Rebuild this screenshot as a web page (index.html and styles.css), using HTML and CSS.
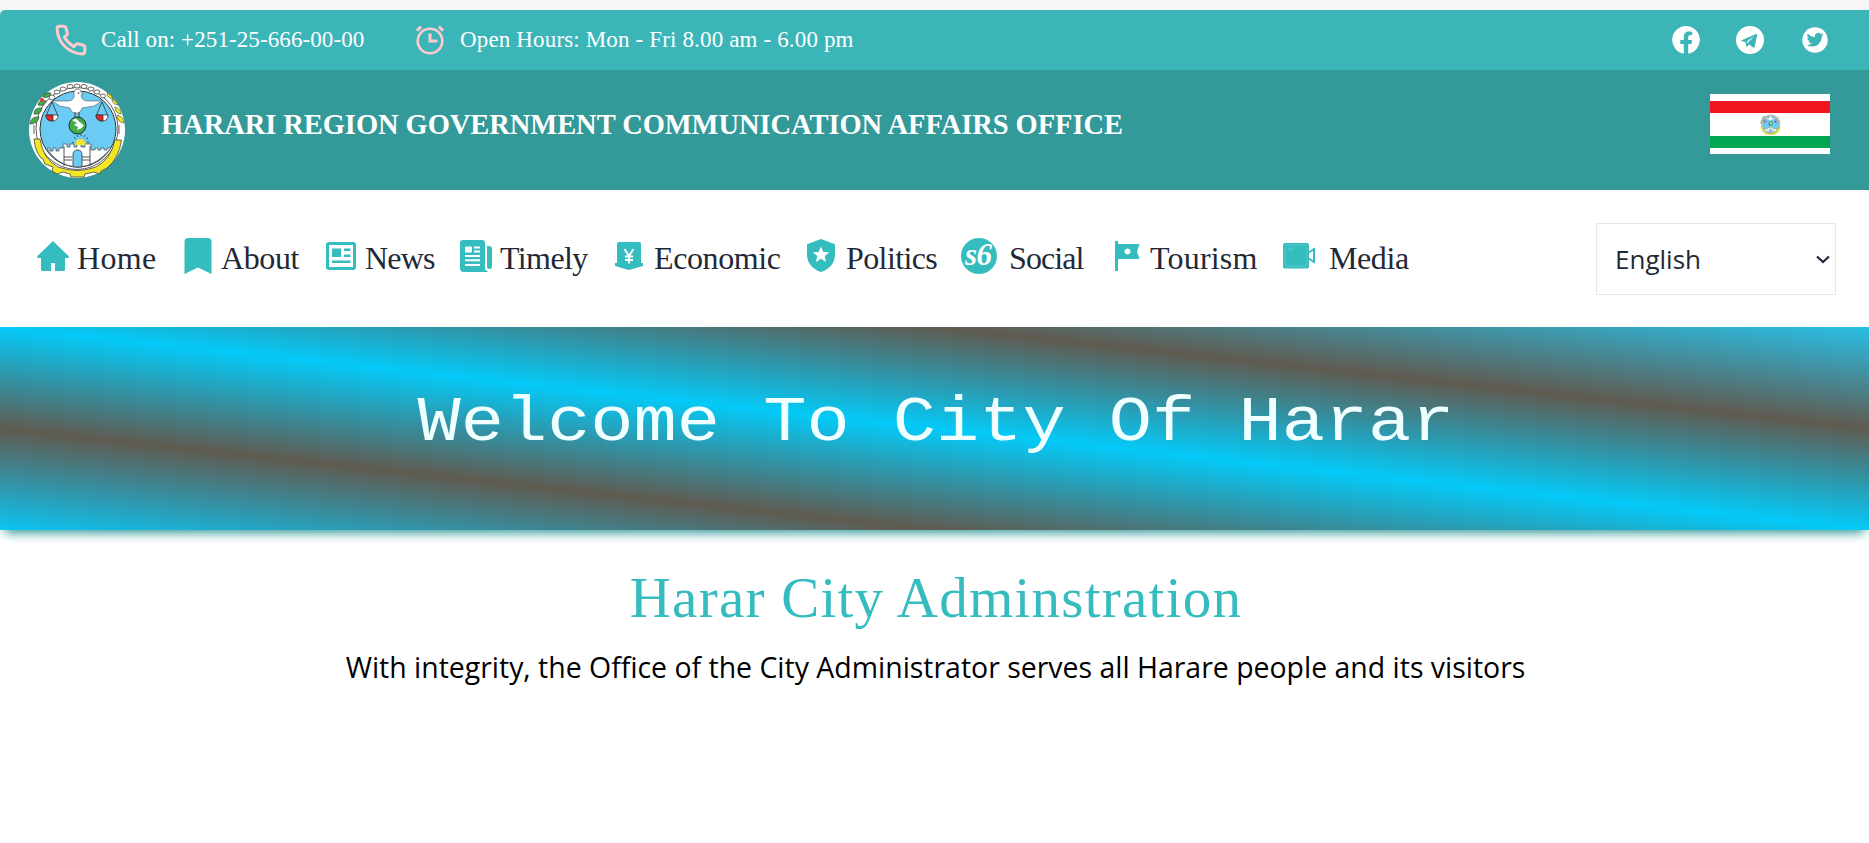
FILE: index.html
```html
<!DOCTYPE html>
<html lang="en">
<head>
<meta charset="utf-8">
<title>Harari Region Government Communication Affairs Office</title>
<link rel="stylesheet" href="styles.css">
</head>
<body>
<div class="topbar">
  <div class="contact">
    <svg class="ic-phone" viewBox="0 0 24 24" width="38" height="38"><path d="M7.2 3.3H4.600Q3.200 3.300 3.200 4.900C3.500 13.500 10.500 20.500 19.100 20.800Q20.700 20.800 20.700 19.400V16.500Q20.700 15.500 19.700 15.300L16.500 14.400Q15.700 14.200 15.100 14.800L13.800 16.200Q9.800 13.600 7.800 10.200L9.300 8.900Q9.900 8.300 9.700 7.500L8.800 4.300Q8.500 3.300 7.200 3.300Z" fill="none" stroke="#fecaca" stroke-width="1.900" stroke-linejoin="round"/></svg>
    <span class="t-call">Call on: +251-25-666-00-00</span>
    <svg class="ic-clock" viewBox="0 0 28 30" width="28" height="30"><g fill="none" stroke="#fecaca"><circle cx="14" cy="16" r="12.300" stroke-width="2.600"/><path d="M14 8.500V16h7.500" stroke-width="3"/><path d="M.9 5.600 5 1.600M27.100 5.600 23 1.600" stroke-width="3"/></g></svg>
    <span class="t-hours">Open Hours: Mon - Fri 8.00 am - 6.00 pm</span>
  </div>
  <div class="social">
    <svg class="fb" viewBox="0 0 28 28" width="28" height="28"><path fill="#fff" d="M14 0a14 14 0 0 0-2.200 27.800V18H8.300v-4h3.500v-3.100c0-3.500 2.100-5.500 5.300-5.500 1.500 0 3.100.3 3.100.3v3.400h-1.800c-1.700 0-2.200 1.100-2.200 2.200V14h3.900l-.6 4h-3.300v9.800A14 14 0 0 0 14 0z"/></svg>
    <svg class="tg" viewBox="0 0 28 28" width="28" height="28"><circle cx="14" cy="14" r="14" fill="#fff"/><path fill="#3bb5b7" d="M21.300 8.500 18.700 20.800c-.2.900-.8 1.100-1.500.7l-4-2.900-1.900 1.900c-.5.500-.9.400-1-.2l-.8-4-3.600-1.200c-.8-.3-.8-.8.2-1.200l13.900-5.900c.8-.3 1.500.1 1.300.5z"/><path fill="#fff" d="m11 15.200 7.300-5.200-6 6-.3 2.500z"/></svg>
    <svg class="tw" viewBox="0 0 26 26" width="26" height="26"><circle cx="13" cy="13" r="12.700" fill="#fff"/><g transform="translate(4.700 4.300) scale(.7)"><path fill="#3bb5b7" d="M23.950 4.570a10 10 0 0 1-2.830.78 4.960 4.960 0 0 0 2.160-2.720c-.95.550-2 .96-3.120 1.180a4.920 4.920 0 0 0-8.380 4.480C7.690 8.100 4.070 6.130 1.640 3.160a4.920 4.920 0 0 0 1.520 6.570 4.900 4.900 0 0 1-2.230-.61v.06a4.920 4.920 0 0 0 3.950 4.830 5 5 0 0 1-2.210.08 4.940 4.940 0 0 0 4.600 3.420A9.870 9.870 0 0 1 0 19.540a14 14 0 0 0 7.550 2.210c9.050 0 14-7.500 14-13.980 0-.21 0-.42-.02-.63a9.940 9.940 0 0 0 2.420-2.570z"/></g></svg>
  </div>
</div>
<header class="brand">
  <svg class="seal" viewBox="0 0 96 96" width="96" height="96">
    <defs><symbol id="seal" viewBox="0 0 96 96">
      <circle cx="48" cy="48" r="48" fill="#fff"/>
      <circle cx="48" cy="46.500" r="41" fill="#fff" stroke="#333" stroke-width=".8"/>
      <circle cx="49" cy="47" r="38" fill="#6ccbf4" stroke="#333" stroke-width="1"/>
      <path d="M18 66h3v3h3v-3h3v3h3v-3h4v-4h4v3h3v-3h4v3h3v-3h4v3h4v-3h6v6h4v-2h3v2h3v-2h3v2h3v-2h4C74 76 64 84 49 85 34 84 24 77 18 66z" fill="#fff" stroke="#444" stroke-width=".7"/>
      <path d="M35 64v20M61 64v20M35 75h8M53 75h8M35 78h8M53 78h8" stroke="#555" stroke-width="1" fill="none"/>
      <path d="M44 85V73q0-5 4.500-5t4.500 5v12z" fill="#6ccbf4" stroke="#333" stroke-width=".8"/>
      <path d="M46.500 62a5 5 0 1 1 10 0v1h-10z" fill="#f6e52a"/>
      <path d="M43 60l2 1M45 55l2 2M48 53l1 2M52 52v2M56 53l-1 2M59 56l-2 1M60 60h-2" stroke="#333" stroke-width=".8"/>
      <path d="M5 57h6Q14 77 29 85 48 92 67 85 82 77 86 58h6.500Q90 76 78 86l-6 3-1 3-6-2-9 2-1 3H42l-1-3-7-2-6 2-5-3 1-4-8-3-2-5-2-1Q6 69 5 57z" fill="#f1e722" stroke="#444" stroke-width=".8"/>
      <g fill="#fff" stroke="#444" stroke-width=".8"><ellipse cx="23" cy="15.500" rx="2.800" ry="2.500"/><ellipse cx="28" cy="10" rx="3" ry="2"/><ellipse cx="34" cy="7" rx="3" ry="2"/><ellipse cx="41" cy="4.500" rx="3" ry="2"/><ellipse cx="48" cy="4" rx="3" ry="2"/><ellipse cx="55" cy="4.500" rx="3" ry="2"/><ellipse cx="62" cy="7" rx="3" ry="2"/><ellipse cx="68" cy="10" rx="3" ry="2"/><ellipse cx="74" cy="14" rx="2.500" ry="2"/></g>
      <g fill="#41ae4a" stroke="#333" stroke-width=".6"><path d="M14 15q1-5 8-4-2 6-8 4zM9 23q1-6 8-4-2 6-8 4zM5 32q0-7 8-6-1 7-8 6zM1 42q1-8 9-7-1 7-9 7z"/></g><circle cx="13" cy="18" r="2" fill="#e33"/>
      <g fill="#f1e722" stroke="#444" stroke-width=".6"><path d="M78 11q5 1 6 6-6-1-6-6zM83 17q5 1 6 6-6-1-6-6zM86 25q6 2 6 7-6-1-6-7zM88 33q7 2 7 8-7-1-7-8z"/></g>
      <path d="M5 52V43M90 52V43" stroke="#666" stroke-width="1"/>
      <g stroke="#333" stroke-width=".8"><path fill="none" d="m23 20-6 14m6-14 6 14M73 20l-6 14m6-14 6 14"/><path d="M17 33h12q0 6-6 6t-6-6zM67 33h12q0 6-6 6t-6-6z" fill="#fff"/><path d="M17 33h7v6q-7 0-7-6zM67 33h7v6q-7 0-7-6z" fill="#ec1d24"/></g>
      <path d="M23 19h15q6 0 7-4V11q0-4 4-4 3 0 3.500 4l2 1-2.500 1q0 6 8 6h13l-8 5-12 2q-2 6-6 5-4 1-6-5l-10-2z" fill="#fff" stroke="#555" stroke-width=".6"/>
      <circle cx="49.500" cy="11" r=".8" fill="#333"/>
      <path d="M46 30v5M50 30v5" stroke="#444" stroke-width="1"/>
      <circle cx="48.500" cy="43.500" r="8.500" fill="#41ae4a" stroke="#222" stroke-width="1"/>
      <path d="m43 38 4-1.500 3 3 5 4-3 3-4 1.500 1-3-4-2 3-2z" fill="#fff"/>
    </symbol></defs>
    <use href="#seal"/>
  </svg>
  <h1><span>HARARI REGION GOVERNMENT COMMUNICATION AFFAIRS OFFICE</span></h1>
  <div class="flag"><div class="red"></div><div class="mid"><svg viewBox="0 0 96 96" width="21" height="21"><use href="#seal"/></svg></div><div class="green"></div></div>
</header>
<nav class="menu">
  <a class="m-home"><svg viewBox="0 0 32 30" width="32" height="30"><path d="M16 0 32 15.500Q32 17 30 17H28V28.500Q28 30 26.500 30H18V22H14V30H5.500Q4 30 4 28.500V17H2Q0 17 0 15.500z"/></svg><span>Home</span></a>
  <a class="m-about"><svg viewBox="0 0 28 36" width="28" height="36"><path d="M4 0H24Q27.500 0 27.500 4V36L14 29.500.5 36V4Q.5 0 4 0z"/></svg><span>About</span></a>
  <a class="m-news"><svg viewBox="0 0 30 28" width="30" height="28"><path fill-rule="evenodd" d="M3 0H27Q30 0 30 3V25Q30 28 27 28H3Q0 28 0 25V3Q0 0 3 0zM3 3V25H27V3z"/><path d="M6 6.500h9v8.500H6zM18 6.500h6.500v2.500H18zM18 12.500h6.500v2.500H18zM6 18.500h18.500v2.500H6z"/></svg><span>News</span></a>
  <a class="m-timely"><svg viewBox="0 0 32 32" width="32" height="32"><path fill-rule="evenodd" d="M3 0H22Q25 0 25 3V28Q25 30.500 28 31.500V32H4Q0 32 0 28V3Q0 0 3 0zM6 6.500Q5 6.500 5 7.500V11.500Q5 12.500 6 12.500H11Q12 12.500 12 11.500V7.500Q12 6.500 11 6.500zM14 6.500v2h6v-2zM14 10.500v2h6v-2zM5 15v2h15v-2zM5 19.300v2h15v-2zM5 24v2h15v-2z"/><path d="M27 6h2q3 0 3 3v17q0 3-2.500 3T27 26z"/></svg><span>Timely</span></a>
  <a class="m-eco"><svg viewBox="0 0 28 28" width="28" height="28"><path d="M4 0H24Q26 0 26 2V21L28 21V24L14 28 0 24V21L2 21V2Q2 0 4 0z"/><path d="m9.500 7 4.500 7 4.500-7M14 14v7.500M10 14.500h8M10 18h8" fill="none" stroke="#fff" stroke-width="1.900"/></svg><span>Economic</span></a>
  <a class="m-pol"><svg viewBox="0 0 28 33" width="28" height="33"><path d="M14 0 28 5.200V15Q28 28 14 33 0 28 0 15V5.200z"/><path fill="#fff" d="m14 7.500 2.300 5.400 5.900.4-4.500 3.800 1.500 5.800-5.200-3.100-5.200 3.100 1.500-5.800-4.500-3.800 5.900-.4z"/></svg><span>Politics</span></a>
  <a class="m-soc"><svg viewBox="0 0 36 36" width="36" height="36"><circle cx="18" cy="18" r="18"/><text x="4" y="27" class="s6" textLength="27">s6</text></svg><span>Social</span></a>
  <a class="m-tour"><svg viewBox="0 0 25 30" width="25" height="30"><path fill-rule="evenodd" d="M0 0H3V3H24.500L22 10.500 24.500 18H3V30H0zM12.500 7.500a3 3 0 1 0 .01 0z"/></svg><span>Tourism</span></a>
  <a class="m-media"><svg viewBox="0 0 32 26" width="32" height="26"><rect width="26" height="25.500" rx="2"/><path d="M2 2h22v21H2zM5 5h5v2H5z" fill="none" stroke="#6bd0d0" stroke-width=".7"/><path d="M25 10 31 6V19l-6-4" fill="none" stroke="#35bcbf" stroke-width="2"/></svg><span>Media</span></a>
  <div class="lang"><span>English</span><svg viewBox="0 0 14 9" width="14" height="9"><path d="m1 1.500 6 5.500 6-5.500" fill="none" stroke="#1f2937" stroke-width="2.300"/></svg></div>
</nav>
<section class="banner"><span>Welcome To City Of Harar</span></section>
<main>
  <h2><span>Harar City Adminstration</span></h2>
  <p><span>With integrity, the Office of the City Administrator serves all Harare people and its visitors</span></p>
</main>
</body>
</html>
```
FILE: styles.css
```css
* { box-sizing: border-box; }
body { margin: 0; padding-top: 10px; background: #f6f6f6; height: 843px; overflow: hidden; font-family: Georgia, "Liberation Serif", serif; display: flex; flex-direction: column; }
span { white-space: nowrap; }
svg { flex: none; display: block; }
.topbar { height: 60px; flex: none; background: #3bb5b7; border-top-left-radius: 5px; display: flex; justify-content: space-between; align-items: center; color: #fff; font-size: 23px; }
.contact, .social { display: flex; align-items: center; }
.ic-phone { margin-left: 52px; }
.t-call { width: 264px; margin-left: 11px; letter-spacing: .1px; }
.ic-clock { margin: 0 16px 0 51px; }
.t-hours { letter-spacing: .15px; }
.social { margin-right: 41px; }
.tg { margin-left: 36px; }
.tw { margin-left: 38px; }
.brand { height: 120px; flex: none; background: #339999; display: flex; padding-left: 29px; }
.seal { margin-top: 12px; }
h1 { margin: 38px 0 0 36px; font-size: 28.5px; line-height: 34px; color: #fff; letter-spacing: -.06px; }
.flag { width: 120px; height: 60px; background: #fff; margin: 24px 39px 0 auto; display: flex; flex-direction: column; padding-top: 7px; }
.red { height: 12px; background: #f0141e; }
.mid { height: 23px; display: flex; justify-content: center; align-items: center; }
.green { height: 12px; background: #00a650; }
.menu { height: 137px; flex: none; background: #fff; display: flex; padding-left: 37px; color: #1f2937; font-size: 32px; fill: #35bcbf; }
.menu a { display: flex; height: 60px; margin-top: 38px; align-items: flex-start; line-height: 60px; letter-spacing: -.4px; }
.menu .m-home { width: 147px; letter-spacing: .3px; } .m-home svg { margin: 13px 8px 0 0; }
.m-about { width: 142px; } .m-about svg { margin: 10px 9px 0 0; }
.menu .m-news { width: 134px; letter-spacing: -.8px; } .m-news svg { margin: 14px 9px 0 0; }
.menu .m-timely { width: 155px; letter-spacing: -.6px; } .m-timely svg { margin: 12px 8px 0 0; }
.m-eco { width: 192px; } .m-eco svg { margin: 14px 11px 0 0; }
.menu .m-pol { width: 154px; letter-spacing: -.6px; } .m-pol svg { margin: 11px 11px 0 0; }
.menu .m-soc { width: 154px; letter-spacing: -.9px; } .m-soc svg { margin: 10px 12px 0 0; }
.menu .m-tour { width: 168px; letter-spacing: .2px; } .m-tour svg { margin: 13px 10px 0 0; }
.m-media svg { margin: 15px 14px 0 0; }
.s6 { font: italic bold 31px "Liberation Serif", serif; fill: #fff; letter-spacing: 0; }
.lang { width: 240px; height: 72px; margin: 33px 33px 0 auto; border: 1px solid #e5e7eb; display: flex; align-items: center; justify-content: space-between; padding: 0 5px 0 18px; font: 26px "Open Sans", sans-serif; }
.banner { height: 203px; flex: none; position: relative; background: linear-gradient(to top right, #0cc4f2, #605b51 25%, #04caf8 50%, #605b51 75%, #29bfe6); box-shadow: 0 8px 10px -5px #339999; display: flex; justify-content: center; padding-top: 47px; font: 72px/80px "Courier New", "Liberation Mono", monospace; color: #f0ffff; }
.banner span { transform: scaleY(.88); transform-origin: 50% 75%; padding-left: 3px; }
main { flex: 1; background: #fff; text-align: center; }
h2 { margin: 38px 0 0; font-weight: 400; font-size: 57px; line-height: 60px; letter-spacing: 1.25px; padding-left: 3px; color: #35bcbf; }
p { margin: 16px 0 0; padding-left: 2px; font: 28.45px/46px "Open Sans", sans-serif; color: #000; }
```
